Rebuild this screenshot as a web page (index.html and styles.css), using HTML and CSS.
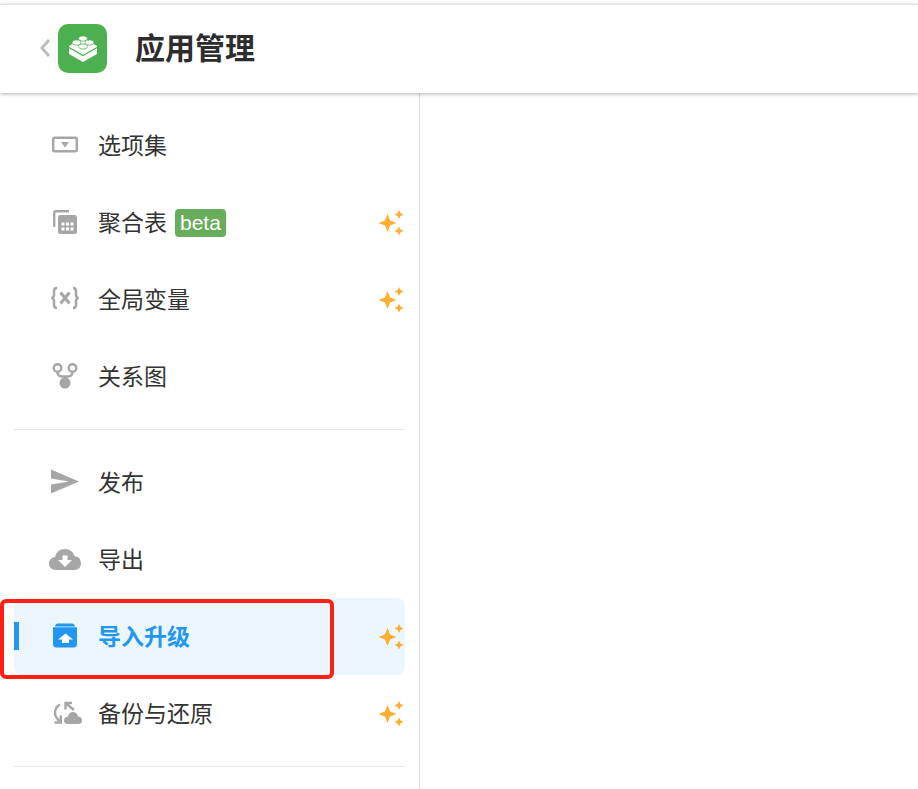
FILE: index.html
```html
<!DOCTYPE html>
<html lang="zh-CN">
<head>
  <meta charset="UTF-8">
  <title>应用管理</title>
  <link rel="stylesheet" href="styles.css">
</head>
<body>

  <!-- Header -->
  <div class="header">
    <svg class="back" viewBox="0 0 12 20"><path d="M10 2 3 10l7 8" fill="none" stroke="#bdbdbd" stroke-width="3"/></svg>
    <div class="app-logo">
      <svg viewBox="0 0 49 49" width="49" height="49">
        <path d="M11 22 25 14l14 8v8L25 38 11 30z" fill="#fff"/>
        <path d="M11 23.500 25 31.500 39 23.500" fill="none" stroke="#4caf50" stroke-width="1.200"/>
        <ellipse cx="25" cy="14.500" rx="4.300" ry="2.600" fill="#fff" stroke="#4caf50" stroke-width=".8"/>
        <ellipse cx="18.500" cy="18.500" rx="4.300" ry="2.600" fill="#fff" stroke="#4caf50" stroke-width=".8"/>
        <ellipse cx="31.500" cy="18.500" rx="4.300" ry="2.600" fill="#fff" stroke="#4caf50" stroke-width=".8"/>
        <ellipse cx="25" cy="22.500" rx="4.300" ry="2.600" fill="#fff" stroke="#4caf50" stroke-width=".8"/>
      </svg>
    </div>
    <div class="app-title">应用管理</div>
  </div>

  <!-- Sidebar -->
  <div class="sidebar">
    <div class="menu-group">
      <div class="menu-item">
        <svg class="menu-icon" viewBox="0 0 30 30"><rect x="3.200" y="6.700" width="23.600" height="13.600" rx="1.500" fill="none" stroke="#a6a6a6" stroke-width="2.500"/><path d="M11 11h8L15 16.500z" fill="#a6a6a6"/></svg>
        <span class="menu-text">选项集</span>
      </div>
      <div class="menu-item">
        <svg class="menu-icon" viewBox="0 0 30 30">
          <path d="M4.200 19V5Q4.200 3.200 6 3.200H19" fill="none" stroke="#a6a6a6" stroke-width="2.400"/>
          <rect x="8" y="7" width="19" height="19" rx="2.500" fill="#a6a6a6"/>
          <g fill="#fff">
            <rect x="11.500" y="14.500" width="3" height="3"/><rect x="16" y="14.500" width="3" height="3"/><rect x="20.500" y="14.500" width="3" height="3"/>
            <rect x="11.500" y="19.500" width="3" height="3"/><rect x="16" y="19.500" width="3" height="3"/><rect x="20.500" y="19.500" width="3" height="3"/>
          </g>
        </svg>
        <span class="menu-text">聚合表</span>
        <span class="beta">beta</span>
        <svg class="sparkle" viewBox="0 0 26 26"><use href="#sparks"/></svg>
      </div>
      <div class="menu-item">
        <svg class="menu-icon" viewBox="0 0 30 30"><path d="M7 3Q4 3 4 6v4q0 2.500-2.500 3Q4 13.500 4 16v4q0 3 3 3M23 3q3 0 3 3v4q0 2.500 2.500 3-2.500.500-2.500 3v4q0 3-3 3" fill="none" stroke="#a6a6a6" stroke-width="2.500"/><path d="M10.500 7.500l9 11M19.500 7.500l-9 11" fill="none" stroke="#a6a6a6" stroke-width="3"/></svg>
        <span class="menu-text">全局变量</span>
        <svg class="sparkle" viewBox="0 0 26 26"><use href="#sparks"/></svg>
      </div>
      <div class="menu-item">
        <svg class="menu-icon" viewBox="0 0 30 30"><circle cx="7.500" cy="6" r="3.800" fill="none" stroke="#a6a6a6" stroke-width="2.400"/><circle cx="22.500" cy="6" r="3.800" fill="none" stroke="#a6a6a6" stroke-width="2.400"/><path d="M7.500 10q0 4 4 4.500h7q4-.500 4-4.500" fill="none" stroke="#a6a6a6" stroke-width="2.400"/><circle cx="15" cy="21" r="5.500" fill="#a6a6a6"/><path d="M15 14v3" stroke="#a6a6a6" stroke-width="2.400"/></svg>
        <span class="menu-text">关系图</span>
      </div>
    </div>

    <div class="menu-group">
      <div class="menu-item">
        <svg class="menu-icon" viewBox="0 0 30 30"><path d="M1 1.500 29 13.500 1 25.500V16.500L19 13.500 1 10.500z" fill="#a6a6a6"/></svg>
        <span class="menu-text">发布</span>
      </div>
      <div class="menu-item">
        <svg class="menu-icon cloud" viewBox="0 1 32 24"><path d="M7 23Q0 23 0 16.500 0 11 6 10 8 2 16 2q7 0 9.500 7Q32 9.500 32 16.500 32 23 25 23z" fill="#a6a6a6"/><path d="M13.500 8.500h5V13H23l-7 7-7-7h4.500z" fill="#fff"/></svg>
        <span class="menu-text">导出</span>
      </div>
      <div class="menu-item active">
        <svg class="menu-icon" viewBox="0 0 30 30"><path d="M5 4.500Q5.500 1.500 8 1.500h14q2.500 0 3 3z" fill="#2196f3"/><path d="M3 5.300h24V22q0 3.500-3.500 3.500h-17Q3 25.500 3 22z" fill="#2196f3"/><path d="M15.500 11.500l7.500 6h-4V21h-7v-3.500H8z" fill="#fff"/></svg>
        <span class="menu-text">导入升级</span>
        <svg class="sparkle" viewBox="0 0 26 26"><use href="#sparks"/></svg>
      </div>
      <div class="menu-item">
        <svg class="menu-icon backup" viewBox="0 0 32 30">
          <path d="M10 5.500Q5 8.500 5 14q0 4 4.500 8" fill="none" stroke="#a6a6a6" stroke-width="2.400"/>
          <path d="M10.800 16.500V23.500H4.500" fill="none" stroke="#a6a6a6" stroke-width="2.400"/>
          <path d="M24 11 16 4.500M15.500 10.500V4H22" fill="none" stroke="#a6a6a6" stroke-width="2.400"/>
          <path d="M18 25q-4 0-4-3.500t3.800-3.800Q19 13 23 13t5.300 4.700Q32 18 32 21.500 32 25 28 25z" fill="#a6a6a6"/>
        </svg>
        <span class="menu-text">备份与还原</span>
        <svg class="sparkle" viewBox="0 0 26 26"><use href="#sparks"/></svg>
      </div>
    </div>
  </div>

  <!-- Red annotation box -->
  <div class="mark-box"></div>

  <svg class="defs" width="0" height="0">
    <defs>
      <g id="sparks" fill="#ffae33">
        <path d="M9.500 4 12.100 10.400 18.500 13 12.100 15.600 9.500 22 6.900 15.600 .500 13 6.900 10.400z"/>
        <path d="M21 0 22.500 3 25.500 4.500 22.500 6 21 9 19.500 6 16.500 4.500 19.500 3z"/>
        <path d="M21 16.500 22.500 19.500 25.500 21 22.500 22.500 21 25.500 19.500 22.500 16.500 21 19.500 19.500z"/>
      </g>
    </defs>
  </svg>

</body>
</html>
```

FILE: styles.css
```css
html, body {
  height: 100%;
}

body {
  margin: 0;
  font-family: "Liberation Sans", "Noto Sans CJK SC", sans-serif;
  background-color: #fff;
  color: #333;
  overflow: hidden;
  padding-top: 4px;
  box-sizing: border-box;
}

.header {
  height: 89px;
  box-sizing: border-box;
  border-top: 1px solid #e4e4e4;
  box-shadow: 0 1px 4px rgba(0, 0, 0, 0.3);
  display: flex;
  align-items: center;
  padding-left: 39px;
  padding-bottom: 2px;
  position: relative;
  z-index: 2;
  background-color: #fff;
}

.back {
  width: 12px;
  height: 20px;
  margin-right: 7px;
}

.app-logo {
  width: 49px;
  height: 49px;
  border-radius: 10px;
  background-color: #4caf50;
  display: flex;
}

.app-title {
  margin-left: 28px;
  padding-bottom: 4px;
  font-size: 30px;
  font-weight: bold;
  color: #2d2d2d;
}

.sidebar {
  width: 420px;
  height: 696px;
  box-sizing: border-box;
  border-right: 1px solid #ddd;
  padding: 14px 14px 0;
}

.menu-group {
  padding-bottom: 14px;
  margin-bottom: 14px;
  border-bottom: 1px solid #e8e8e8;
}

.menu-item {
  height: 77px;
  display: flex;
  align-items: center;
  padding-left: 36px;
  padding-right: 1px;
  border-radius: 8px;
  position: relative;
}

.menu-icon {
  width: 30px;
  height: 30px;
  flex: none;
}

.menu-icon.cloud {
  width: 32px;
  margin-left: -1px;
  margin-right: -1px;
}

.menu-icon.backup {
  width: 32px;
  margin-right: -2px;
}

.menu-text {
  margin-left: 18px;
  padding-bottom: 4px;
  font-size: 23px;
  color: #333;
}

.beta {
  margin-left: 8px;
  padding: 0 5px;
  height: 28px;
  line-height: 27px;
  border-radius: 4px;
  background-color: #67ad5b;
  color: #fff;
  font-size: 21px;
}

.sparkle {
  width: 26px;
  height: 26px;
  margin-left: auto;
}

.menu-item.active {
  background-color: #ebf6fe;
}

.menu-item.active::before {
  content: "";
  position: absolute;
  left: 0;
  top: 24px;
  width: 5px;
  height: 28px;
  background-color: #2196f3;
}

.menu-item.active .menu-text {
  color: #2196f3;
  font-weight: bold;
}

.mark-box {
  position: absolute;
  left: 0;
  top: 599px;
  width: 334px;
  height: 80px;
  box-sizing: border-box;
  border: 4px solid #ff2015;
  border-radius: 6px;
}

.defs {
  position: absolute;
}
```
